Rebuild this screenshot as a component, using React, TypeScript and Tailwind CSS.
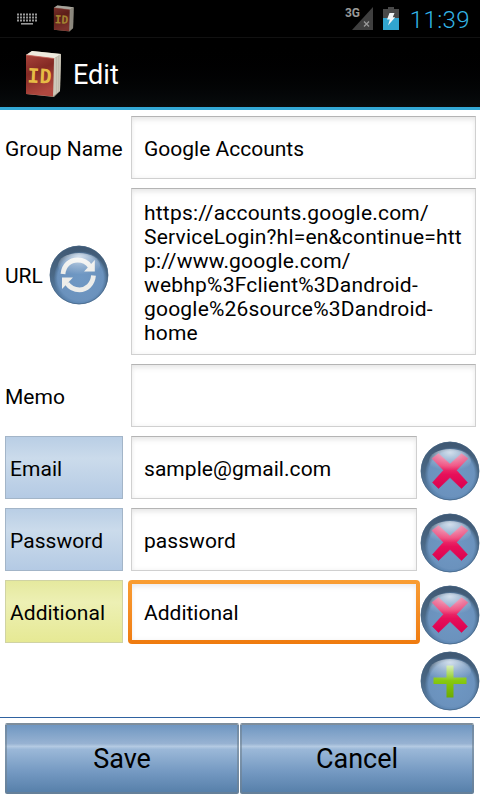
import type { ReactNode } from 'react';

const urlLines = [
  'https://accounts.google.com/',
  'ServiceLogin?hl=en&continue=htt',
  'p://www.google.com/',
  'webhp%3Fclient%3Dandroid-',
  'google%26source%3Dandroid-',
  'home',
];

const entries = [
  { label: 'Email', value: 'sample@gmail.com', tone: 'blue', focused: false },
  { label: 'Password', value: 'password', tone: 'blue', focused: false },
  { label: 'Additional', value: 'Additional', tone: 'yellow', focused: true },
];

function BookIcon({ className }: { className: string }) {
  return (
    <svg viewBox="0 0 36 48" className={className}>
      <path d="M1 5 7 1 36 4 35 41 29 47 1 44z" fill="#a9a28f" />
      <path d="M1 5 7 1 36 4 29 8.500z" fill="#eeeade" />
      <path d="M29 8.500 36 4 35 41 28 46z" fill="#cdc8ba" />
      <path d="M31.500 7v37M33.600 6v36" stroke="#b3ad9d" strokeWidth="0.500" />
      <path d="M1 5 29 8.500 28 46.500 1 44z" fill="url(#cover)" />
      <path d="M1 5 29 8.500" stroke="#c9675c" strokeWidth="0.800" />
      <text
        x="14.500"
        y="33"
        textAnchor="middle"
        fontFamily="DejaVu Sans Mono, monospace"
        fontWeight="700"
        fontSize="20"
        fill="#e6bb45"
        transform="rotate(3 14 26)"
      >
        ID
      </text>
      <defs>
        <linearGradient id="cover" x1="0" y1="0" x2="0.300" y2="1">
          <stop offset="0" stopColor="#a8433a" />
          <stop offset="0.450" stopColor="#842a24" />
          <stop offset="1" stopColor="#b0483f" />
        </linearGradient>
      </defs>
    </svg>
  );
}

function KeyboardIcon() {
  return (
    <svg width="23" height="13" viewBox="0 0 23 13" fill="none" stroke="#999" className="mt-px">
      <path d="M1 1.500h21M1 4.500h21M1 7.500h21" strokeWidth="2" strokeDasharray="2 1" />
      <path d="M5 10.800h12" strokeWidth="1.600" />
    </svg>
  );
}

function SignalIcon() {
  return (
    <svg width="21" height="23" viewBox="0 0 21 23">
      <path d="M21 0v23H0z" fill="#3f3f3f" />
      <path d="M12 14.500l5 5M17 14.500l-5 5" stroke="#999" strokeWidth="1.300" />
    </svg>
  );
}

function BatteryIcon() {
  return (
    <svg width="16" height="23" viewBox="0 0 16 23">
      <path d="M5 0h6v2h5v9H0V2h5z" fill="#484848" />
      <path d="M0 11h16v12H0z" fill="#31a5cf" />
      <path d="M6.500 6h5L9.800 10.200h2.400L5 18.500l1.800-6H4z" fill="#f2f6f7" />
    </svg>
  );
}

function OrbButton({ name, children }: { name: string; children: ReactNode }) {
  return (
    <button type="button" aria-label={name} className="block size-[60px] shrink-0">
      <svg width="60" height="60" viewBox="0 0 60 60">
        <defs>
          <linearGradient id="orb-rim" x1="0" y1="0" x2="0" y2="1">
            <stop offset="0" stopColor="#3f5873" />
            <stop offset="0.500" stopColor="#4a6885" />
            <stop offset="1" stopColor="#5c85b2" />
          </linearGradient>
          <radialGradient id="orb-core" cx="0.500" cy="0.500" r="0.500">
            <stop offset="0" stopColor="#6f98c4" />
            <stop offset="0.860" stopColor="#6b92bd" />
            <stop offset="1" stopColor="#6590bd" stopOpacity="0.100" />
          </radialGradient>
          <radialGradient id="orb-shine" cx="0.500" cy="0.150" r="0.750">
            <stop offset="0" stopColor="#fff" stopOpacity="0.700" />
            <stop offset="0.500" stopColor="#fff" stopOpacity="0.300" />
            <stop offset="1" stopColor="#fff" stopOpacity="0" />
          </radialGradient>
          <linearGradient id="cross" x1="0" y1="0" x2="0" y2="1">
            <stop offset="0" stopColor="#e0507f" />
            <stop offset="0.350" stopColor="#ee3a71" />
            <stop offset="0.600" stopColor="#e6105a" />
            <stop offset="1" stopColor="#dd004f" />
          </linearGradient>
          <linearGradient id="plus" x1="0" y1="0" x2="0" y2="1">
            <stop offset="0" stopColor="#a5d858" />
            <stop offset="0.500" stopColor="#86c810" />
            <stop offset="1" stopColor="#6dab00" />
          </linearGradient>
        </defs>
        <circle cx="30" cy="30" r="29.200" fill="url(#orb-rim)" />
        <circle cx="31.500" cy="33" r="26.500" fill="url(#orb-core)" />
        <circle cx="30" cy="30" r="28.900" fill="none" stroke="#466482" strokeWidth="0.700" />
        {children}
        <ellipse cx="30" cy="20" rx="21" ry="12" fill="url(#orb-shine)" />
      </svg>
    </button>
  );
}

function RefreshGlyph() {
  return (
    <g fill="none" stroke="#ededea" strokeWidth="4.800">
      <path d="M14 29C14.800 20 21 15 28.500 15c5.500 0 10 2.500 12.500 6.500" />
      <path d="M44.500 30.500C43.700 39.500 37.500 44.800 30.500 44.800c-5.500 0-9.800-2.500-12.500-6.500" />
      <path d="M45.800 15v11.500H35z" fill="#ededea" stroke="none" />
      <path d="M13 44V32.500H24z" fill="#ededea" stroke="none" />
    </g>
  );
}

function CrossGlyph() {
  return (
    <path
      d="M18.500 12.500 30 23 41.500 12.500 48 17.500 36.500 29.300 47.500 41.500 41.500 47.500 30 36.500 18.500 47.500 12.500 41.500 23.500 29.300 12 17.500z"
      fill="url(#cross)"
      stroke="url(#cross)"
      strokeWidth="0.500"
      strokeLinejoin="round"
    />
  );
}

function PlusGlyph() {
  return <path d="M26.500 14.500h7v12h13v6.500h-13v13.500h-7v-13.500h-13v-6.500h13z" fill="url(#plus)" />;
}

function Field({ className = '', children }: { className?: string; children?: ReactNode }) {
  return (
    <div
      className={`min-h-[63px] border border-[#d0d0d0] border-t-[#b4b4b4] bg-white pl-3 text-[21px] leading-6 shadow-[inset_0_5px_6px_-3px_#e4e4e4,inset_0_0_5px_#f0f0f0] ${className}`}
    >
      {children}
    </div>
  );
}

function FocusedField({ children }: { children: ReactNode }) {
  return (
    <div className="-mx-[3px] h-16 w-[292px] rounded-[4px] bg-gradient-to-b from-[#f99d33] to-[#ef7b0e] p-1">
      <div className="flex h-full items-center bg-white pt-0.5 pl-3 text-[21px] leading-6 shadow-[inset_0_5px_6px_-3px_#e8e8ee,inset_0_0_5px_#f2f2f2]">
        {children}
      </div>
    </div>
  );
}

export default function App() {
  return (
    <div className="flex h-[800px] w-[480px] flex-col overflow-hidden bg-white font-['Roboto',sans-serif] text-black">
      {/* Status bar */}
      <div className="flex h-[38px] shrink-0 items-center border-b border-[#111] bg-black pr-2.5 pl-4">
        <KeyboardIcon />
        <BookIcon className="ml-3.5 h-[27px] w-[21px] opacity-70" />
        <div className="ml-auto flex items-center">
          <span className="-mr-2 mb-3 text-[12px] leading-none font-bold text-[#999]">3G</span>
          <SignalIcon />
          <span className="ml-2.5">
            <BatteryIcon />
          </span>
          <span className="ml-2.5 w-[61px] pt-[3px] text-right text-[24px] leading-none font-light tracking-[0.4px] whitespace-nowrap text-[#33b5e5]">
            11:39
          </span>
        </div>
      </div>

      {/* Action bar */}
      <div className="flex h-[72px] shrink-0 items-center border-b-[3px] border-[#33a9d6] bg-gradient-to-b from-black to-[#080c0e] pl-[25px]">
        <BookIcon className="mt-0.5 h-12 w-9" />
        <h1 className="ml-3 pt-1.5 text-[27px] leading-none text-white">Edit</h1>
      </div>

      {/* Form */}
      <div className="flex flex-1 flex-col gap-[9px] pt-1.5">
        <div className="flex pl-[5px]">
          <div className="flex w-[126px] items-center pt-1 text-[21px] whitespace-nowrap">Group Name</div>
          <Field className="flex w-[345px] items-center pt-0.5">Google Accounts</Field>
        </div>

        <div className="flex pl-[5px]">
          <div className="flex w-[126px] items-center pt-[7px] text-[21px]">
            <span className="w-[44px] pt-1">URL</span>
            <OrbButton name="Refresh">
              <RefreshGlyph />
            </OrbButton>
          </div>
          <Field className="h-[167px] w-[345px] pt-3 tracking-[0.2px]">
            {urlLines.map((line) => (
              <div key={line} className="whitespace-nowrap">{line}</div>
            ))}
          </Field>
        </div>

        <div className="flex pl-[5px]">
          <div className="flex w-[126px] items-center pt-1 text-[21px]">Memo</div>
          <Field className="w-[345px]" />
        </div>

        {entries.map((entry) => (
          <div key={entry.label} className="flex h-[63px] pl-[5px]">
            <div
              className={`mr-2 flex w-[118px] items-center border pt-1 pl-1 text-[21px] tracking-[0.05px] ${
                entry.tone === 'yellow'
                  ? 'border-[#d0d3a4] bg-gradient-to-b from-[#e5e99e] via-[#edf0b4] via-35% to-[#e6e994]'
                  : 'border-[#a3b5c8] bg-gradient-to-b from-[#b9cee5] via-[#cbdbeb] via-35% to-[#b4cae4]'
              }`}
            >
              {entry.label}
            </div>
            {entry.focused ? (
              <FocusedField>{entry.value}</FocusedField>
            ) : (
              <Field className="flex w-[286px] items-center pt-0.5 tracking-[0.05px]">{entry.value}</Field>
            )}
            <div className="mt-[5px] ml-[3px]">
              <OrbButton name={`Remove ${entry.label}`}>
                <CrossGlyph />
              </OrbButton>
            </div>
          </div>
        ))}

        <div className="-mt-px flex justify-end">
          <OrbButton name="Add field">
            <PlusGlyph />
          </OrbButton>
        </div>
      </div>

      {/* Bottom buttons */}
      <div className="flex h-[83px] shrink-0 gap-px border-t border-[#2f62a0] pt-[5px] pl-[5px]">
        {['Save', 'Cancel'].map((text) => (
          <button
            key={text}
            type="button"
            className="h-[71px] w-[234px] rounded-[2px] border-2 border-[#6f8190]/60 border-t-[#7e8e9c] bg-[linear-gradient(#6b94c0,#97b2d2_29%,#b4cae2_33%,#9bb8d8_37%,#7398c1_70%,#557ea8)] bg-origin-border pt-0.5 text-[27px]"
          >
            {text}
          </button>
        ))}
      </div>
    </div>
  );
}
